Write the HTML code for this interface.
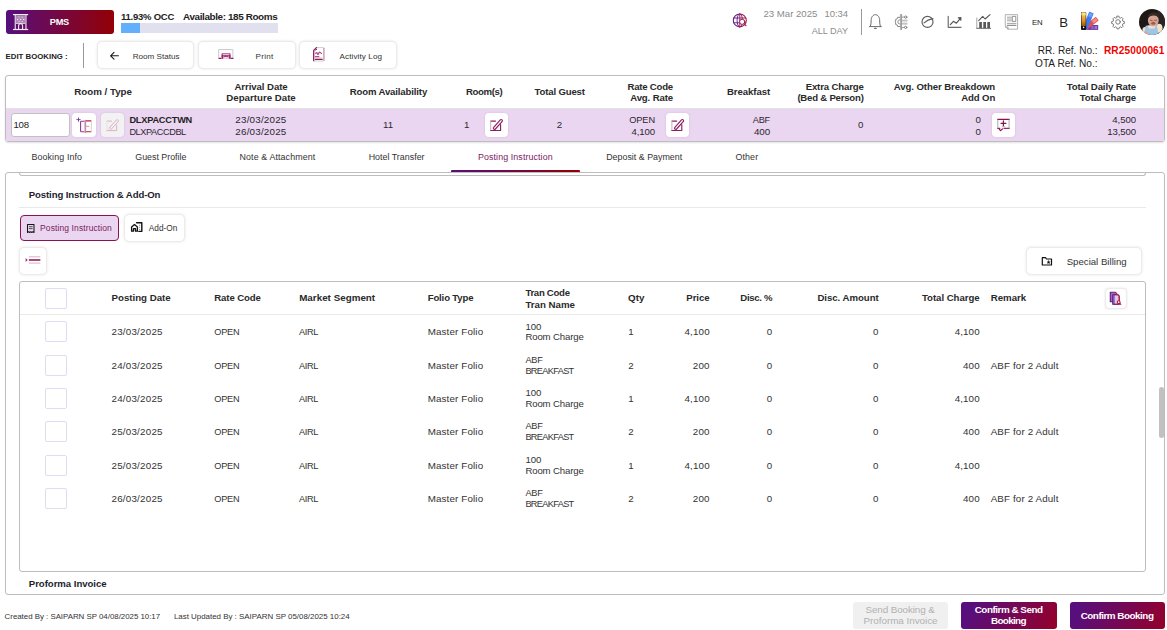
<!DOCTYPE html>
<html><head><meta charset="utf-8"><title>Edit Booking</title>
<style>
*{box-sizing:border-box;margin:0;padding:0}
html,body{width:1167px;height:630px;overflow:hidden;background:#fff}
body{font-family:"Liberation Sans",sans-serif;color:#333;font-size:10px;position:relative}
.a{position:absolute;white-space:pre}
.btn{position:absolute;background:#fff;border:1px solid #ebebeb;border-radius:5px;box-shadow:0 0 3px rgba(0,0,0,.10)}
.ib{position:absolute;background:#fff;border-radius:4px;box-shadow:0 0 2px rgba(120,60,120,.18)}
.cb{position:absolute;left:45px;width:22px;height:21px;border:1px solid #dcdff3;border-radius:2px;background:#fff}
svg{position:absolute;overflow:visible}
</style></head><body>

<!-- ===== top bar ===== -->
<div class="a" style="left:6px;top:10px;width:108px;height:24px;border-radius:3px;background:linear-gradient(90deg,#570f7d,#930005)"></div>
<div class="a" style="left:121px;top:23px;width:157px;height:10px;background:#e0e0ee"></div>
<div class="a" style="left:121px;top:23px;width:19px;height:10px;background:#62b0fb"></div>
<div class="a" style="left:861px;top:9px;width:1px;height:26px;background:#9a9a9a"></div>

<!-- ===== row 2 ===== -->
<div class="a" style="left:83px;top:43px;width:1px;height:25px;background:#999"></div>
<div class="btn" style="left:97px;top:41px;width:97px;height:28px"></div>
<div class="btn" style="left:198px;top:41px;width:98px;height:28px"></div>
<div class="btn" style="left:299px;top:41px;width:98px;height:28px"></div>

<!-- ===== summary table ===== -->
<div class="a" style="left:5px;top:75px;width:1160px;height:67px;border:1px solid #bdbdbd;border-radius:3px;overflow:hidden;box-shadow:0 1px 2px rgba(0,0,0,.12)">
  <div class="a" style="left:0;top:32px;width:1160px;height:1px;background:#e2e2e2"></div>
  <div class="a" style="left:0;top:33px;width:1160px;height:33px;background:#ead6f0"></div>
</div>
<div class="a" style="left:11px;top:113px;width:59px;height:24px;border:1px solid #c2c2c2;border-radius:3px;background:#fff"></div>
<div class="ib" style="left:72px;top:113px;width:24px;height:24px"></div>
<div class="ib" style="left:101px;top:113px;width:23px;height:24px;background:#f2f2f2"></div>
<div class="ib" style="left:485px;top:113px;width:23px;height:24px"></div>
<div class="ib" style="left:666px;top:113px;width:23px;height:24px"></div>
<div class="ib" style="left:992px;top:113px;width:23px;height:24px"></div>

<!-- ===== tabs ===== -->
<div class="a" style="left:451px;top:170px;width:129px;height:2px;border-radius:1px 1px 0 0;background:linear-gradient(90deg,#570f7d,#930005)"></div>

<!-- ===== main panel ===== -->
<div class="a" style="left:5px;top:172px;width:1160px;height:423px;border:1px solid #bdbdbd;border-radius:3px"></div>
<div class="a" style="left:19px;top:173px;width:1127px;height:3px;border:1px solid #bdbdbd;border-top:none;border-radius:0 0 3px 3px;background:#fff"></div>
<div class="a" style="left:19px;top:207px;width:1127px;height:1px;background:#e9e9e9"></div>

<div class="a" style="left:20px;top:215px;width:99px;height:26px;border:1px solid #8a1253;border-radius:4px;background:#ead6f0"></div>
<div class="btn" style="left:124px;top:214px;width:61px;height:28px"></div>
<div class="btn" style="left:19px;top:247px;width:28px;height:28px"></div>
<div class="btn" style="left:1026px;top:247px;width:116px;height:28px"></div>

<!-- ===== data table ===== -->
<div class="a" style="left:19px;top:281px;width:1127px;height:291px;border:1px solid #bdbdbd;border-radius:3px"></div>
<div class="a" style="left:20px;top:314px;width:1125px;height:1px;background:#eaeaea"></div>
<div class="cb" style="top:288px"></div>
<div class="cb" style="top:321px"></div>
<div class="cb" style="top:354.5px"></div>
<div class="cb" style="top:388px"></div>
<div class="cb" style="top:421px"></div>
<div class="cb" style="top:454.5px"></div>
<div class="cb" style="top:488px"></div>
<div class="ib" style="left:1105px;top:288px;width:22px;height:21px;border:1px solid #ececec"></div>
<div class="a" style="left:1159px;top:387px;width:5px;height:51px;border-radius:2.5px;background:#c1c1c1"></div>

<!-- ===== footer ===== -->
<div class="a" style="left:853px;top:602px;width:95px;height:27px;border-radius:3px;background:#f0f0f0"></div>
<div class="a" style="left:961px;top:602px;width:96px;height:27px;border-radius:3px;background:linear-gradient(115deg,#570f7d 10%,#95002a)"></div>
<div class="a" style="left:1070px;top:602px;width:95px;height:27px;border-radius:3px;background:linear-gradient(115deg,#570f7d 10%,#95002a)"></div>

<svg width="1167" height="630" viewBox="0 0 1167 630" style="left:0;top:0" fill="none" stroke-linecap="round" stroke-linejoin="round">
<defs>
<linearGradient id="gp" x1="0" x2="1" y1="0" y2="0"><stop offset="0" stop-color="#5c1a8c"/><stop offset="1" stop-color="#a51845"/></linearGradient>
<linearGradient id="gy" x1="0" x2="0" y1="0" y2="1"><stop offset="0" stop-color="#f7d774"/><stop offset=".45" stop-color="#e6952a"/><stop offset=".8" stop-color="#99540f"/><stop offset=".81" stop-color="#111"/><stop offset="1" stop-color="#111"/></linearGradient>
<clipPath id="av"><circle cx="1152" cy="22" r="13"/></clipPath>
</defs>

<!-- PMS building -->
<g fill="#fff" stroke="none" opacity=".92">
<rect x="13" y="14" width="15.2" height="1.2"/><rect x="13" y="28.9" width="15.2" height="1.2"/>
<rect x="14.7" y="14" width="1.1" height="16"/><rect x="25.4" y="14" width="1.1" height="16"/>
<rect x="16" y="15.4" width="9.2" height="7.6" opacity=".55"/>
<rect x="16" y="23" width="9.2" height="1" opacity=".8"/>
<circle cx="17.6" cy="19.4" r=".7"/><circle cx="20.6" cy="19.4" r=".7"/><circle cx="23.6" cy="19.4" r=".7"/>
<circle cx="19.1" cy="17" r=".6"/><circle cx="22.1" cy="17" r=".6"/><circle cx="19.1" cy="21.6" r=".6"/><circle cx="22.1" cy="21.6" r=".6"/>
</g>
<path d="M18.6 29v-3.2a2 2 0 0 1 4 0V29" stroke="#fff" stroke-width="1.1" opacity=".92"/>

<!-- globe search -->
<g stroke="url(#gp)" stroke-width="1.050">
<circle cx="739.8" cy="20.4" r="6.500"/>
<ellipse cx="739.8" cy="20.4" rx="2.700" ry="6.500" stroke-width=".95"/>
<path d="M733.800 18h12M733.800 22.800h12M739.800 14v13" stroke-width=".95"/>
</g>
<circle cx="742.200" cy="21.800" r="2.600" fill="#fff" stroke="#9a1a55" stroke-width="1"/>
<path d="M744.100 23.800l1.900 1.900" stroke="#a51845" stroke-width="1.200"/>

<!-- bell -->
<g stroke="#6a6a6a" stroke-width="1">
<path d="M869.5 26.6h11.8"/>
<path d="M870.4 26.4c.6-1.6.7-3.400.7-5.400 0-3.900 1.800-6.300 4.300-6.300s4.300 2.400 4.300 6.300c0 2 .1 3.800.7 5.400"/>
<path d="M874.6 28.400h1.600" stroke-width="1.100"/>
</g>
<!-- ai / circuit -->
<g stroke="#7d7d7d" stroke-width=".95">
<path d="M901.100 15v14" stroke-width="1.500" stroke="#8c8c8c"/>
<path d="M900.300 14.900l.8-.8.8.8M900.300 29.100l.8.800.8-.800" stroke="#999" stroke-width=".8"/>
<path d="M900 17.300h-2.300l-.5 1.500-1.500.5v1.700l-.7.900.7.900v1.700l1.500.5.5 1.500h2.300"/>
<path d="M900 19.700a2.200 2.200 0 0 0 0 4.400" stroke="#8a8a8a"/>
<path d="M902.400 20.100h4.700M902.400 21h4.700M902.400 23.200h4.700M902.400 24.100h4.700" stroke="#a0a0a0" stroke-width=".7"/>
<path d="M902.300 17.100h2.200M902.300 27.400h2.200" stroke="#909090"/>
<circle cx="905.700" cy="17.100" r="1.150"/><circle cx="905.700" cy="27.400" r="1.150"/>
</g>
<!-- circle slash -->
<g stroke="#5e5e5e" stroke-width="1.150">
<circle cx="927.500" cy="21.900" r="5.500"/>
<path d="M924 22.900c2.500-2.300 5.500-3.700 9-4.300"/>
</g>
<!-- line chart -->
<g stroke="#555" stroke-width="1.150">
<path d="M948.200 16.200v11.100h12.900" stroke="#6a6a6a"/>
<path d="M950.300 24.700l3.100-3.400 3 1.900 4-4.900"/>
<path d="M958.300 17.900l2.600-.4-.1 2.700" fill="#555"/>
</g>
<!-- bar chart -->
<g>
<path d="M976.800 18v10.200" stroke="#a5a5a5" stroke-width="1"/><path d="M976.800 28.300h13.900" stroke="#666" stroke-width="1"/>
<rect x="979.200" y="22" width="2.700" height="6" fill="#5a5a5a"/><rect x="983.300" y="22" width="2.700" height="6" fill="#5a5a5a"/><rect x="987.300" y="22" width="2.700" height="6" fill="#5a5a5a"/>
<path d="M978.700 20.600l4-4.200 2.400 2.600 4.900-4.400" stroke="#555" stroke-width="1.100"/>
</g>
<!-- doc -->
<g stroke="#a8a8a8" stroke-width=".9">
<path d="M1005.600 14.700h12v14.500h-9.600l-2.400-2.200z"/>
<path d="M1005.600 27h2.400v2.200" stroke="#999"/>
<path d="M1007.400 17.200h3.900M1007.400 19h3.900M1007.400 20.800h3.900M1007.400 23.400h8.600" stroke="#9a9a9a"/>
<path d="M1007.400 25.300h8.600" stroke="#777" stroke-width="1"/>
<rect x="1012.700" y="16.400" width="3.100" height="5" stroke="#888"/>
</g>
<!-- palette -->
<g stroke="none">
<rect x="1087" y="25" width="11.200" height="4.900" fill="#6b3aa6"/>
<rect x="1091.200" y="26" width="2.600" height="3" fill="#8c62c4"/><rect x="1094.600" y="26" width="2.600" height="3" fill="#9a74d0"/>
<g transform="rotate(52 1084.500 28.500)"><rect x="1082.300" y="12.300" width="4.600" height="16" rx=".5" fill="#e2504f"/><rect x="1083" y="13" width="3.200" height="5" fill="#f28d88"/></g>
<g transform="rotate(22 1084.500 28.500)"><rect x="1082.600" y="11" width="4.800" height="17" rx=".5" fill="#3c7bef"/><rect x="1083.300" y="11.700" width="3.400" height="4" fill="#6fa1f7"/></g>
<rect x="1081" y="12" width="5.200" height="17.900" rx=".8" fill="#111"/>
<rect x="1081.500" y="12.500" width="4.200" height="17" fill="url(#gy)"/>
<rect x="1081.500" y="12.500" width="4.200" height="2.800" fill="#fae08a"/>
<circle cx="1083.600" cy="27.400" r=".8" fill="#fff"/>
</g>
<!-- gear -->
<g stroke="#777" stroke-width="1.100" transform="translate(1118 21.900) scale(.87) translate(-1118 -21.900)">
<circle cx="1118" cy="21.900" r="2.600"/>
<path d="M1116.900 15.300h2.200l.4 1.700 1.300.6 1.500-.9 1.600 1.600-.9 1.500.6 1.300 1.700.4v2.200l-1.700.4-.6 1.300.9 1.500-1.600 1.600-1.500-.9-1.300.6-.4 1.700h-2.200l-.4-1.700-1.300-.6-1.500.9-1.600-1.600.9-1.500-.6-1.300-1.700-.4v-2.200l1.700-.4.600-1.300-.9-1.500 1.600-1.600 1.500.9 1.300-.6z"/>
</g>
<!-- avatar -->
<g clip-path="url(#av)" stroke="none">
<rect x="1139" y="9" width="26" height="26" fill="#1d1817"/>
<rect x="1157" y="9" width="8" height="26" fill="#2a2321"/>
<ellipse cx="1159.200" cy="28.300" rx="3.300" ry="4.600" fill="#efe4ca"/>
<ellipse cx="1145" cy="30.300" rx="2.600" ry="3.200" fill="#efe4ca"/>
<path d="M1145.600 25.800l11.300-.9 1.600 10.100h-14.500z" fill="#9fc4e8"/>
<path d="M1147.500 25.600l1.500 3 5.500-.2 1.500-3.200" fill="#efe4ca"/>
<ellipse cx="1153.300" cy="20.300" rx="5.400" ry="6.200" fill="#d6a493"/>
<path d="M1147.800 18.600c.2-4.600 3-6 5.600-6 2.800 0 5.200 1.700 5.200 5.400-1.200-1.900-2.800-2.600-5-2.600-2.400 0-4.400.8-5.800 3.200z" fill="#3a2a24"/>
<ellipse cx="1153.300" cy="23.300" rx="2.100" ry="1.500" fill="#a85550"/>
<path d="M1150.300 20.300h2M1154.600 20.300h2" stroke="#7a4a40" stroke-width=".8"/>
<ellipse cx="1146" cy="32.700" rx="2.300" ry="1.600" fill="#d9a998"/>
</g>

<!-- row 2: arrow -->
<path d="M110.600 55.800h7.800M114 52.400l-3.400 3.400 3.400 3.400" stroke="#1a1a1a" stroke-width="1.100"/>
<!-- print -->
<path d="M218.700 58v-8.400h14.200v8.400" stroke="#c9c9c9" stroke-width="1"/>
<path d="M219 58.400h2M231 58.400h2" stroke="#981b62" stroke-width="1.100"/>
<path d="M221.400 58.600v-4.100c0-.9.600-1.500 1.500-1.500h6.300c.9 0 1.500.6 1.500 1.500v4.100z" fill="#b4548c" stroke="none"/>
<rect x="222.800" y="53.700" width="6.500" height="1.200" fill="#e9c8dc" stroke="none"/>
<rect x="223.400" y="56" width="5.300" height="2.900" fill="#ecd3e3" stroke="none"/>
<path d="M224 56.300h4" stroke="#981b62" stroke-width="1"/>
<path d="M222.300 55.300v3.200M229.800 55.300v3.200" stroke="#981b62" stroke-width="1"/>
<!-- activity log -->
<path d="M316.300 47.500h6.700" stroke="#c8cfc8" stroke-width=".9"/><path d="M314.500 61.100h8.500" stroke="#c8cfc8" stroke-width=".9"/>
<path d="M313.700 60.700v-10.300l2.800-2.800" stroke="#8f1a5c" stroke-width="1.300"/>
<path d="M323.900 48.300v12.200" stroke="#cf9cbb" stroke-width="1.500"/>
<circle cx="315.700" cy="49.600" r=".7" fill="#fff" stroke="#8f1a5c" stroke-width=".7"/>
<path d="M315.700 53.600c.7-1.300 1.300-1.300 1.700 0s1 1 1.500-.6 1.300-.600 2.500.500" stroke="#ab4a86" stroke-width="1.150"/>
<path d="M315.400 56.800h3.500M315.400 59.400h6.800" stroke="#8f1a5c" stroke-width="1.100"/><path d="M315.400 58h6.800" stroke="#d5a9c5" stroke-width=".8"/>

<!-- summary icons -->
<!-- door/split -->
<path d="M78.500 117.900v3.400M76.800 119.600h3.400" stroke="#6a2a9a" stroke-width=".85"/>
<path d="M84 121.300h-2.700c-.4 0-.7.300-.7.700v9c0 .400.300.700.700.700h2.700" stroke="#8a3a9a" stroke-width="1.100"/>
<path d="M85.300 120.600v11.700" stroke="#c98aa8" stroke-width="1.700"/>
<path d="M86.400 120.900h4.600M86.400 131.700h4.600" stroke="#c0203a" stroke-width="1.100"/>
<path d="M91.300 121.600v9.500" stroke="#d2d2d2" stroke-width="1"/>
<path d="M86.500 126.300h2.400" stroke="#cf93ae" stroke-width="1"/>
<!-- edit disabled -->
<g stroke="#dcaec8" stroke-width="1">
<path d="M111.500 121.100h-4.500"/><path d="M107 121.100v9.500" stroke="#eadfe5"/><path d="M107 130.600h9.700v-5.500"/>
<path d="M109.800 127.300l6.600-7.300c.5-.5 1.300-.5 1.700 0 .5.400.5 1.200 0 1.700l-6.600 7.300c-.5.500-1.300.5-1.700 0-.5-.4-.5-1.200 0-1.700z" fill="#f3f3f3"/>
</g>
<!-- edit 1 -->
<g stroke="#8e1f5e" stroke-width="1.150">
<path d="M495.500 121.100h-4.700" /><path d="M490.700 121.100v9.400" stroke="#b9a9b3" stroke-width=".9"/><path d="M490.700 130.500h9.900v-6"/>
<path d="M493.700 127.300l6.600-7.400c.5-.5 1.300-.5 1.700 0 .5.400.5 1.200 0 1.700l-6.600 7.400c-.5.500-1.300.5-1.700 0-.5-.4-.5-1.200 0-1.700z" fill="#fff"/>
</g>
<!-- edit 2 -->
<g stroke="#8e1f5e" stroke-width="1.150" transform="translate(181.200 0)">
<path d="M495.500 121.100h-4.700" /><path d="M490.700 121.100v9.400" stroke="#b9a9b3" stroke-width=".9"/><path d="M490.700 130.500h9.900v-6"/>
<path d="M493.700 127.300l6.600-7.400c.5-.5 1.300-.5 1.700 0 .5.400.5 1.200 0 1.700l-6.600 7.400c-.5.500-1.300.5-1.700 0-.5-.4-.5-1.200 0-1.700z" fill="#fff"/>
</g>
<!-- add-on box -->
<path d="M997.800 119.400h11.300" stroke="#8a1050" stroke-width="1.400"/>
<path d="M997.800 120v8.300M1009.100 120v8.300" stroke="#a9a0a6" stroke-width=".9"/>
<path d="M997.800 128.400h2M1004 128.400h5.100" stroke="#9a2a68" stroke-width="1.100"/>
<path d="M999.300 129.300l1.300 1.300 1.900-1.700" stroke="#8a1050" stroke-width="1.200"/>
<path d="M1003.400 120.900v4.900M1001 123.300h4.900" stroke="#8a1050" stroke-width="1.250"/>
<path d="M1002.200 126.700h2.600" stroke="#b9a0b0" stroke-width="1.100"/>

<!-- section icons -->
<!-- receipt -->
<g stroke="#151515" stroke-width="1.050">
<path d="M27.500 232.500v-8h6.500v8l-1.100-.8-1.100.8-1.100-.8-1.100.8-1-.8z"/>
<path d="M29.300 226.700h2.900M29.300 228.600h2.900" stroke-width=".85" stroke="#333"/>
</g>
<!-- house + building -->
<g stroke="#111" stroke-width="1.300">
<path d="M131.600 231.200v-4.300l2.900-2.500 2.900 2.500v4.300h-1.900v-2.600h-2v2.600z"/>
<path d="M136.600 222.800h5.200v8.600h-2.900" stroke-width="1.400"/>
<path d="M139.600 225.200v.1M139.600 227.200v.1M139.600 229.200v.1" stroke="#777" stroke-width="1"/>
</g>
<!-- indent -->
<path d="M29.200 256.800h10.800M29.200 263.100h10.800" stroke="#dbb0c8" stroke-width="1"/>
<path d="M29.400 260h10.400" stroke="#8a1050" stroke-width="1.500"/>
<path d="M26 258.800l1.300 1.200-1.300 1.200z" fill="#8a1050" stroke="#8a1050" stroke-width=".4"/>
<!-- folder star -->
<g stroke="#111" stroke-width="1.200">
<path d="M1042.300 265v-7.300h3.200l1 1.300h5v6z"/>
<path d="M1048.600 260.600l.5 1.100 1.100.1-.8.800.2 1.100-1-.6-1 .6.200-1.100-.8-.8 1.100-.1z" fill="#111" stroke-width=".3"/>
</g>
<!-- table copy icon -->
<g stroke="url(#gp)" stroke-width="1.100">
<path d="M1110.300 292.200h5l1.500 1.500v8h-6.500z" fill="#7a3aa0" fill-opacity=".75"/>
<path d="M1112.700 294.700h5l1.500 1.500v8h-6.500z" fill="#fff"/>
<path d="M1113.900 294.700h3.800l1.500 1.500v8h-5.300z" fill="#caa3d4" fill-opacity=".6"/>
<circle cx="1118.700" cy="302.200" r="1.400" fill="#fff" stroke="#b01840"/>
<path d="M1119.800 303.300l1 1" stroke="#b01840"/>
</g>
</svg>

<div class="a" style="left:49.7px;top:16px;font-size:9.2px;line-height:12px;color:#fff;letter-spacing:-0.18px;font-weight:bold;">PMS</div>
<div class="a" style="left:121.0px;top:10px;font-size:9.5px;line-height:13px;color:#222;letter-spacing:-0.24px;font-weight:bold;">11.93% OCC</div>
<div class="a" style="left:183.0px;top:10px;font-size:9.9px;line-height:13px;color:#222;letter-spacing:-0.37px;font-weight:bold;">Available: 185 Rooms</div>
<div class="a" style="left:763.4px;top:7px;font-size:9.65px;line-height:13px;color:#8c8c8c;">23 Mar 2025</div>
<div class="a" style="left:824.6px;top:7px;font-size:9.5px;line-height:13px;color:#8c8c8c;letter-spacing:-0.07px;">10:34</div>
<div class="a" style="left:811.8px;top:25px;font-size:9.1px;line-height:12px;color:#8c8c8c;letter-spacing:-0.03px;">ALL DAY</div>
<div class="a" style="left:1031.9px;top:17px;font-size:7.8px;line-height:11px;color:#222;">EN</div>
<div class="a" style="left:1059.2px;top:14px;font-size:13.2px;line-height:17px;color:#222;">B</div>
<div class="a" style="left:5.6px;top:51px;font-size:7.8px;line-height:11px;color:#222;letter-spacing:0.01px;font-weight:bold;">EDIT BOOKING :</div>
<div class="a" style="left:132.7px;top:51px;font-size:8.1px;line-height:11px;color:#333;">Room Status</div>
<div class="a" style="left:255.6px;top:51px;font-size:8.1px;line-height:11px;color:#333;letter-spacing:0.26px;">Print</div>
<div class="a" style="left:339.6px;top:51px;font-size:8.1px;line-height:11px;color:#333;letter-spacing:0.09px;">Activity Log</div>
<div class="a" style="left:1037.8px;top:44px;font-size:10.05px;line-height:13px;color:#222;letter-spacing:0.01px;">RR. Ref. No.:</div>
<div class="a" style="left:1103.9px;top:44px;font-size:10.1px;line-height:13px;color:#f00000;letter-spacing:0.12px;font-weight:bold;">RR25000061</div>
<div class="a" style="left:1035.0px;top:57px;font-size:10.1px;line-height:13px;color:#222;letter-spacing:0.05px;">OTA Ref. No.:</div>
<div class="a" style="left:74.2px;top:85px;font-size:9.75px;line-height:13px;color:#2a2a2a;font-weight:bold;">Room / Type</div>
<div class="a" style="left:234.5px;top:80px;font-size:9.6px;line-height:13px;color:#2a2a2a;letter-spacing:-0.06px;font-weight:bold;">Arrival Date</div>
<div class="a" style="left:226.3px;top:91px;font-size:9.7px;line-height:13px;color:#2a2a2a;font-weight:bold;">Departure Date</div>
<div class="a" style="left:349.7px;top:85px;font-size:9.6px;line-height:13px;color:#2a2a2a;letter-spacing:-0.14px;font-weight:bold;">Room Availability</div>
<div class="a" style="left:466.0px;top:85px;font-size:9.6px;line-height:13px;color:#2a2a2a;letter-spacing:-0.35px;font-weight:bold;">Room(s)</div>
<div class="a" style="left:534.6px;top:85px;font-size:9.6px;line-height:13px;color:#2a2a2a;letter-spacing:-0.17px;font-weight:bold;">Total Guest</div>
<div class="a" style="left:627.5px;top:80px;font-size:9.6px;line-height:13px;color:#2a2a2a;letter-spacing:-0.23px;font-weight:bold;">Rate Code</div>
<div class="a" style="left:630.2px;top:91px;font-size:9.6px;line-height:13px;color:#2a2a2a;letter-spacing:-0.12px;font-weight:bold;">Avg. Rate</div>
<div class="a" style="left:726.9px;top:85px;font-size:9.6px;line-height:13px;color:#2a2a2a;letter-spacing:-0.04px;font-weight:bold;">Breakfast</div>
<div class="a" style="left:805.7px;top:80px;font-size:9.6px;line-height:13px;color:#2a2a2a;letter-spacing:-0.15px;font-weight:bold;">Extra Charge</div>
<div class="a" style="left:797.4px;top:91px;font-size:9.6px;line-height:13px;color:#2a2a2a;letter-spacing:-0.22px;font-weight:bold;">(Bed &amp; Person)</div>
<div class="a" style="left:893.7px;top:80px;font-size:9.6px;line-height:13px;color:#2a2a2a;letter-spacing:-0.08px;font-weight:bold;">Avg. Other Breakdown</div>
<div class="a" style="left:961.2px;top:91px;font-size:9.6px;line-height:13px;color:#2a2a2a;letter-spacing:-0.11px;font-weight:bold;">Add On</div>
<div class="a" style="left:1066.7px;top:80px;font-size:9.6px;line-height:13px;color:#2a2a2a;letter-spacing:-0.12px;font-weight:bold;">Total Daily Rate</div>
<div class="a" style="left:1079.7px;top:91px;font-size:9.6px;line-height:13px;color:#2a2a2a;letter-spacing:-0.14px;font-weight:bold;">Total Charge</div>
<div class="a" style="left:13.4px;top:118px;font-size:9.6px;line-height:13px;color:#222;letter-spacing:-0.16px;">108</div>
<div class="a" style="left:129.4px;top:114px;font-size:9.2px;line-height:12px;color:#222;letter-spacing:-0.20px;font-weight:bold;">DLXPACCTWN</div>
<div class="a" style="left:129.4px;top:126px;font-size:9.2px;line-height:12px;color:#2e2630;letter-spacing:-0.42px;">DLXPACCDBL</div>
<div class="a" style="left:235.3px;top:113px;font-size:9.8px;line-height:13px;color:#2e2630;letter-spacing:0.22px;">23/03/2025</div>
<div class="a" style="left:235.3px;top:125px;font-size:9.8px;line-height:13px;color:#2e2630;letter-spacing:0.22px;">26/03/2025</div>
<div class="a" style="left:383.0px;top:118px;font-size:9.7px;line-height:13px;color:#2e2630;">11</div>
<div class="a" style="left:464.1px;top:118px;font-size:9.7px;line-height:13px;color:#2e2630;">1</div>
<div class="a" style="left:556.8px;top:118px;font-size:9.7px;line-height:13px;color:#2e2630;">2</div>
<div class="a" style="left:629.2px;top:114px;font-size:9.2px;line-height:12px;color:#2e2630;letter-spacing:-0.07px;">OPEN</div>
<div class="a" style="left:631.4px;top:125px;font-size:9.6px;line-height:13px;color:#2e2630;letter-spacing:-0.08px;">4,100</div>
<div class="a" style="left:752.7px;top:114px;font-size:9.2px;line-height:12px;color:#2e2630;letter-spacing:-0.16px;">ABF</div>
<div class="a" style="left:753.9px;top:125px;font-size:9.8px;line-height:13px;color:#2e2630;letter-spacing:0.02px;">400</div>
<div class="a" style="left:858.1px;top:118px;font-size:9.7px;line-height:13px;color:#2e2630;">0</div>
<div class="a" style="left:975.5px;top:113px;font-size:9.7px;line-height:13px;color:#2e2630;">0</div>
<div class="a" style="left:975.5px;top:125px;font-size:9.7px;line-height:13px;color:#2e2630;">0</div>
<div class="a" style="left:1112.2px;top:113px;font-size:9.6px;line-height:13px;color:#2e2630;letter-spacing:-0.03px;">4,500</div>
<div class="a" style="left:1107.2px;top:125px;font-size:9.6px;line-height:13px;color:#2e2630;letter-spacing:-0.09px;">13,500</div>
<div class="a" style="left:31.4px;top:151px;font-size:8.9px;line-height:12px;color:#333;letter-spacing:0.12px;">Booking Info</div>
<div class="a" style="left:135.3px;top:151px;font-size:8.85px;line-height:12px;color:#333;">Guest Profile</div>
<div class="a" style="left:239.5px;top:151px;font-size:8.9px;line-height:12px;color:#333;letter-spacing:0.11px;">Note &amp; Attachment</div>
<div class="a" style="left:368.7px;top:151px;font-size:8.9px;line-height:12px;color:#333;letter-spacing:0.01px;">Hotel Transfer</div>
<div class="a" style="left:478.0px;top:151px;font-size:8.9px;line-height:12px;color:#7a1a62;letter-spacing:0.09px;">Posting Instruction</div>
<div class="a" style="left:606.2px;top:151px;font-size:8.9px;line-height:12px;color:#333;">Deposit &amp; Payment</div>
<div class="a" style="left:735.4px;top:151px;font-size:8.9px;line-height:12px;color:#333;letter-spacing:0.14px;">Other</div>
<div class="a" style="left:28.7px;top:188px;font-size:9.6px;line-height:13px;color:#1e1e2e;letter-spacing:-0.10px;font-weight:bold;">Posting Instruction &amp; Add-On</div>
<div class="a" style="left:40.1px;top:222px;font-size:8.5px;line-height:12px;color:#7a1a62;letter-spacing:0.10px;">Posting Instruction</div>
<div class="a" style="left:148.8px;top:222px;font-size:8.3px;line-height:12px;color:#333;">Add-On</div>
<div class="a" style="left:1066.7px;top:255px;font-size:9.65px;line-height:13px;color:#333;">Special Billing</div>
<div class="a" style="left:111.5px;top:291px;font-size:9.7px;line-height:13px;color:#2a2a2a;font-weight:bold;">Posting Date</div>
<div class="a" style="left:214.3px;top:291px;font-size:9.6px;line-height:13px;color:#2a2a2a;letter-spacing:-0.11px;font-weight:bold;">Rate Code</div>
<div class="a" style="left:299.2px;top:291px;font-size:9.8px;line-height:13px;color:#2a2a2a;letter-spacing:0.02px;font-weight:bold;">Market Segment</div>
<div class="a" style="left:427.7px;top:291px;font-size:9.6px;line-height:13px;color:#2a2a2a;letter-spacing:-0.15px;font-weight:bold;">Folio Type</div>
<div class="a" style="left:525.4px;top:286px;font-size:9.6px;line-height:13px;color:#2a2a2a;letter-spacing:-0.29px;font-weight:bold;">Tran Code</div>
<div class="a" style="left:525.4px;top:298px;font-size:9.7px;line-height:13px;color:#2a2a2a;font-weight:bold;">Tran Name</div>
<div class="a" style="left:628.0px;top:291px;font-size:9.8px;line-height:13px;color:#2a2a2a;letter-spacing:0.08px;font-weight:bold;">Qty</div>
<div class="a" style="left:686.3px;top:291px;font-size:9.6px;line-height:13px;color:#2a2a2a;letter-spacing:-0.05px;font-weight:bold;">Price</div>
<div class="a" style="left:740.3px;top:291px;font-size:9.6px;line-height:13px;color:#2a2a2a;letter-spacing:-0.32px;font-weight:bold;">Disc. %</div>
<div class="a" style="left:817.4px;top:291px;font-size:9.6px;line-height:13px;color:#2a2a2a;letter-spacing:-0.01px;font-weight:bold;">Disc. Amount</div>
<div class="a" style="left:922.0px;top:291px;font-size:9.6px;line-height:13px;color:#2a2a2a;letter-spacing:-0.03px;font-weight:bold;">Total Charge</div>
<div class="a" style="left:990.7px;top:291px;font-size:9.7px;line-height:13px;color:#2a2a2a;letter-spacing:-0.01px;font-weight:bold;">Remark</div>
<div class="a" style="left:111.5px;top:325px;font-size:9.8px;line-height:13px;color:#333;letter-spacing:0.22px;">23/03/2025</div>
<div class="a" style="left:214.3px;top:326px;font-size:9.2px;line-height:12px;color:#333;letter-spacing:-0.27px;">OPEN</div>
<div class="a" style="left:299.0px;top:326px;font-size:9.2px;line-height:12px;color:#333;letter-spacing:-0.39px;">AIRL</div>
<div class="a" style="left:427.7px;top:325px;font-size:9.8px;line-height:13px;color:#333;letter-spacing:0.14px;">Master Folio</div>
<div class="a" style="left:525.4px;top:320px;font-size:9.65px;line-height:13px;color:#333;">100</div>
<div class="a" style="left:525.4px;top:330px;font-size:9.6px;line-height:13px;color:#333;letter-spacing:-0.13px;">Room Charge</div>
<div class="a" style="left:628.2px;top:325px;font-size:9.7px;line-height:13px;color:#333;">1</div>
<div class="a" style="left:684.5px;top:325px;font-size:9.8px;line-height:13px;color:#333;letter-spacing:0.15px;">4,100</div>
<div class="a" style="left:766.8px;top:325px;font-size:9.7px;line-height:13px;color:#333;">0</div>
<div class="a" style="left:873.0px;top:325px;font-size:9.7px;line-height:13px;color:#333;">0</div>
<div class="a" style="left:954.7px;top:325px;font-size:9.8px;line-height:13px;color:#333;letter-spacing:0.10px;">4,100</div>
<div class="a" style="left:111.5px;top:359px;font-size:9.8px;line-height:13px;color:#333;letter-spacing:0.22px;">24/03/2025</div>
<div class="a" style="left:214.3px;top:360px;font-size:9.2px;line-height:12px;color:#333;letter-spacing:-0.27px;">OPEN</div>
<div class="a" style="left:299.0px;top:360px;font-size:9.2px;line-height:12px;color:#333;letter-spacing:-0.39px;">AIRL</div>
<div class="a" style="left:427.7px;top:359px;font-size:9.8px;line-height:13px;color:#333;letter-spacing:0.14px;">Master Folio</div>
<div class="a" style="left:525.4px;top:354px;font-size:9.2px;line-height:12px;color:#333;letter-spacing:-0.16px;">ABF</div>
<div class="a" style="left:525.4px;top:365px;font-size:9.2px;line-height:12px;color:#333;letter-spacing:-0.66px;">BREAKFAST</div>
<div class="a" style="left:628.2px;top:359px;font-size:9.7px;line-height:13px;color:#333;">2</div>
<div class="a" style="left:692.7px;top:359px;font-size:9.8px;line-height:13px;color:#333;letter-spacing:0.27px;">200</div>
<div class="a" style="left:766.8px;top:359px;font-size:9.7px;line-height:13px;color:#333;">0</div>
<div class="a" style="left:873.0px;top:359px;font-size:9.7px;line-height:13px;color:#333;">0</div>
<div class="a" style="left:963.1px;top:359px;font-size:9.8px;line-height:13px;color:#333;letter-spacing:0.07px;">400</div>
<div class="a" style="left:990.7px;top:359px;font-size:9.8px;line-height:13px;color:#333;letter-spacing:0.13px;">ABF for 2 Adult</div>
<div class="a" style="left:111.5px;top:392px;font-size:9.8px;line-height:13px;color:#333;letter-spacing:0.22px;">24/03/2025</div>
<div class="a" style="left:214.3px;top:393px;font-size:9.2px;line-height:12px;color:#333;letter-spacing:-0.27px;">OPEN</div>
<div class="a" style="left:299.0px;top:393px;font-size:9.2px;line-height:12px;color:#333;letter-spacing:-0.39px;">AIRL</div>
<div class="a" style="left:427.7px;top:392px;font-size:9.8px;line-height:13px;color:#333;letter-spacing:0.14px;">Master Folio</div>
<div class="a" style="left:525.4px;top:386px;font-size:9.65px;line-height:13px;color:#333;">100</div>
<div class="a" style="left:525.4px;top:397px;font-size:9.6px;line-height:13px;color:#333;letter-spacing:-0.13px;">Room Charge</div>
<div class="a" style="left:628.2px;top:392px;font-size:9.7px;line-height:13px;color:#333;">1</div>
<div class="a" style="left:684.5px;top:392px;font-size:9.8px;line-height:13px;color:#333;letter-spacing:0.15px;">4,100</div>
<div class="a" style="left:766.8px;top:392px;font-size:9.7px;line-height:13px;color:#333;">0</div>
<div class="a" style="left:873.0px;top:392px;font-size:9.7px;line-height:13px;color:#333;">0</div>
<div class="a" style="left:954.7px;top:392px;font-size:9.8px;line-height:13px;color:#333;letter-spacing:0.10px;">4,100</div>
<div class="a" style="left:111.5px;top:425px;font-size:9.8px;line-height:13px;color:#333;letter-spacing:0.22px;">25/03/2025</div>
<div class="a" style="left:214.3px;top:426px;font-size:9.2px;line-height:12px;color:#333;letter-spacing:-0.27px;">OPEN</div>
<div class="a" style="left:299.0px;top:426px;font-size:9.2px;line-height:12px;color:#333;letter-spacing:-0.39px;">AIRL</div>
<div class="a" style="left:427.7px;top:425px;font-size:9.8px;line-height:13px;color:#333;letter-spacing:0.14px;">Master Folio</div>
<div class="a" style="left:525.4px;top:420px;font-size:9.2px;line-height:12px;color:#333;letter-spacing:-0.16px;">ABF</div>
<div class="a" style="left:525.4px;top:431px;font-size:9.2px;line-height:12px;color:#333;letter-spacing:-0.66px;">BREAKFAST</div>
<div class="a" style="left:628.2px;top:425px;font-size:9.7px;line-height:13px;color:#333;">2</div>
<div class="a" style="left:692.7px;top:425px;font-size:9.8px;line-height:13px;color:#333;letter-spacing:0.27px;">200</div>
<div class="a" style="left:766.8px;top:425px;font-size:9.7px;line-height:13px;color:#333;">0</div>
<div class="a" style="left:873.0px;top:425px;font-size:9.7px;line-height:13px;color:#333;">0</div>
<div class="a" style="left:963.1px;top:425px;font-size:9.8px;line-height:13px;color:#333;letter-spacing:0.07px;">400</div>
<div class="a" style="left:990.7px;top:425px;font-size:9.8px;line-height:13px;color:#333;letter-spacing:0.13px;">ABF for 2 Adult</div>
<div class="a" style="left:111.5px;top:459px;font-size:9.8px;line-height:13px;color:#333;letter-spacing:0.22px;">25/03/2025</div>
<div class="a" style="left:214.3px;top:460px;font-size:9.2px;line-height:12px;color:#333;letter-spacing:-0.27px;">OPEN</div>
<div class="a" style="left:299.0px;top:460px;font-size:9.2px;line-height:12px;color:#333;letter-spacing:-0.39px;">AIRL</div>
<div class="a" style="left:427.7px;top:459px;font-size:9.8px;line-height:13px;color:#333;letter-spacing:0.14px;">Master Folio</div>
<div class="a" style="left:525.4px;top:453px;font-size:9.65px;line-height:13px;color:#333;">100</div>
<div class="a" style="left:525.4px;top:464px;font-size:9.6px;line-height:13px;color:#333;letter-spacing:-0.13px;">Room Charge</div>
<div class="a" style="left:628.2px;top:459px;font-size:9.7px;line-height:13px;color:#333;">1</div>
<div class="a" style="left:684.5px;top:459px;font-size:9.8px;line-height:13px;color:#333;letter-spacing:0.15px;">4,100</div>
<div class="a" style="left:766.8px;top:459px;font-size:9.7px;line-height:13px;color:#333;">0</div>
<div class="a" style="left:873.0px;top:459px;font-size:9.7px;line-height:13px;color:#333;">0</div>
<div class="a" style="left:954.7px;top:459px;font-size:9.8px;line-height:13px;color:#333;letter-spacing:0.10px;">4,100</div>
<div class="a" style="left:111.5px;top:492px;font-size:9.8px;line-height:13px;color:#333;letter-spacing:0.22px;">26/03/2025</div>
<div class="a" style="left:214.3px;top:493px;font-size:9.2px;line-height:12px;color:#333;letter-spacing:-0.27px;">OPEN</div>
<div class="a" style="left:299.0px;top:493px;font-size:9.2px;line-height:12px;color:#333;letter-spacing:-0.39px;">AIRL</div>
<div class="a" style="left:427.7px;top:492px;font-size:9.8px;line-height:13px;color:#333;letter-spacing:0.14px;">Master Folio</div>
<div class="a" style="left:525.4px;top:487px;font-size:9.2px;line-height:12px;color:#333;letter-spacing:-0.16px;">ABF</div>
<div class="a" style="left:525.4px;top:498px;font-size:9.2px;line-height:12px;color:#333;letter-spacing:-0.66px;">BREAKFAST</div>
<div class="a" style="left:628.2px;top:492px;font-size:9.7px;line-height:13px;color:#333;">2</div>
<div class="a" style="left:692.7px;top:492px;font-size:9.8px;line-height:13px;color:#333;letter-spacing:0.27px;">200</div>
<div class="a" style="left:766.8px;top:492px;font-size:9.7px;line-height:13px;color:#333;">0</div>
<div class="a" style="left:873.0px;top:492px;font-size:9.7px;line-height:13px;color:#333;">0</div>
<div class="a" style="left:963.1px;top:492px;font-size:9.8px;line-height:13px;color:#333;letter-spacing:0.07px;">400</div>
<div class="a" style="left:990.7px;top:492px;font-size:9.8px;line-height:13px;color:#333;letter-spacing:0.13px;">ABF for 2 Adult</div>
<div class="a" style="left:28.8px;top:577px;font-size:9.6px;line-height:13px;color:#1e1e2e;letter-spacing:-0.04px;font-weight:bold;">Proforma Invoice</div>
<div class="a" style="left:4.6px;top:611px;font-size:7.9px;line-height:11px;color:#333;letter-spacing:-0.02px;">Created By : SAIPARN SP 04/08/2025 10:17</div>
<div class="a" style="left:173.9px;top:611px;font-size:7.95px;line-height:11px;color:#333;letter-spacing:-0.01px;">Last Updated By : SAIPARN SP 05/08/2025 10:24</div>
<div class="a" style="left:865.5px;top:603px;font-size:9.9px;line-height:13px;color:#b0b0b0;letter-spacing:-0.12px;">Send Booking &amp;</div>
<div class="a" style="left:863.5px;top:614px;font-size:9.9px;line-height:13px;color:#b0b0b0;letter-spacing:-0.04px;">Proforma Invoice</div>
<div class="a" style="left:974.7px;top:603px;font-size:9.9px;line-height:13px;color:#fff;letter-spacing:-0.48px;font-weight:bold;">Confirm &amp; Send</div>
<div class="a" style="left:991.0px;top:614px;font-size:9.9px;line-height:13px;color:#fff;letter-spacing:-0.67px;font-weight:bold;">Booking</div>
<div class="a" style="left:1080.7px;top:609px;font-size:9.9px;line-height:13px;color:#fff;letter-spacing:-0.49px;font-weight:bold;">Confirm Booking</div>
</body></html>
